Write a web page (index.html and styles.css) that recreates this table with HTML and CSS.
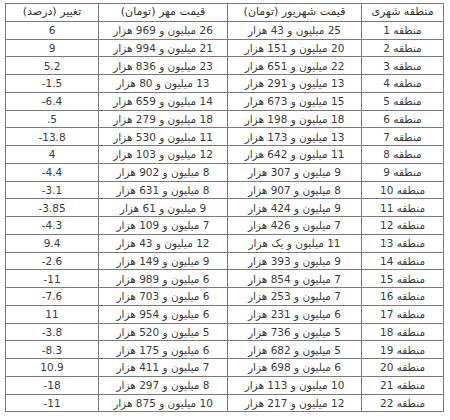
FILE: index.html
```html
<!DOCTYPE html>
<html lang="fa">
<head>
<meta charset="utf-8">
<link rel="stylesheet" href="styles.css">
</head>
<body>
<table class="price-table" dir="rtl">
<colgroup>
<col class="c-region"><col class="c-shahrivar"><col class="c-mehr"><col class="c-change">
</colgroup>
<thead>
<tr><th>منطقه شهری</th><th>قیمت شهریور (تومان)</th><th>قیمت مهر (تومان)</th><th>تغییر (درصد)</th></tr>
</thead>
<tbody>
<tr><td>منطقه 1</td><td>25 میلیون و 43 هزار</td><td>26 میلیون و 969 هزار</td><td class="chg" dir="ltr"><bdo dir="ltr">6</bdo></td></tr>
<tr><td>منطقه 2</td><td>20 میلیون و 151 هزار</td><td>21 میلیون و 994 هزار</td><td class="chg" dir="ltr"><bdo dir="ltr">9</bdo></td></tr>
<tr><td>منطقه 3</td><td>22 میلیون و 651 هزار</td><td>23 میلیون و 836 هزار</td><td class="chg" dir="ltr"><bdo dir="ltr">5.2</bdo></td></tr>
<tr><td>منطقه 4</td><td>13 میلیون و 291 هزار</td><td>13 میلیون و 80 هزار</td><td class="chg" dir="ltr"><bdo dir="ltr">-1.5</bdo></td></tr>
<tr><td>منطقه 5</td><td>15 میلیون و 673 هزار</td><td>14 میلیون و 659 هزار</td><td class="chg" dir="ltr"><bdo dir="ltr">-6.4</bdo></td></tr>
<tr><td>منطقه 6</td><td>18 میلیون و 198 هزار</td><td>18 میلیون و 279 هزار</td><td class="chg" dir="ltr"><bdo dir="ltr">.5</bdo></td></tr>
<tr><td>منطقه 7</td><td>13 میلیون و 173 هزار</td><td>11 میلیون و 530 هزار</td><td class="chg" dir="ltr"><bdo dir="ltr">-13.8</bdo></td></tr>
<tr><td>منطقه 8</td><td>11 میلیون و 642 هزار</td><td>12 میلیون و 103 هزار</td><td class="chg" dir="ltr"><bdo dir="ltr">4</bdo></td></tr>
<tr><td>منطقه 9</td><td>9 میلیون و 307 هزار</td><td>8 میلیون و 902 هزار</td><td class="chg" dir="ltr"><bdo dir="ltr">-4.4</bdo></td></tr>
<tr><td>منطقه 10</td><td>8 میلیون و 907 هزار</td><td>8 میلیون و 631 هزار</td><td class="chg" dir="ltr"><bdo dir="ltr">-3.1</bdo></td></tr>
<tr><td>منطقه 11</td><td>9 میلیون و 424 هزار</td><td>9 میلیون و 61 هزار</td><td class="chg" dir="ltr"><bdo dir="ltr">-3.85</bdo></td></tr>
<tr><td>منطقه 12</td><td>7 میلیون و 426 هزار</td><td>7 میلیون و 109 هزار</td><td class="chg" dir="ltr"><bdo dir="ltr">-4.3</bdo></td></tr>
<tr><td>منطقه 13</td><td>11 میلیون و یک هزار</td><td>12 میلیون و 43 هزار</td><td class="chg" dir="ltr"><bdo dir="ltr">9.4</bdo></td></tr>
<tr><td>منطقه 14</td><td>9 میلیون و 393 هزار</td><td>9 میلیون و 149 هزار</td><td class="chg" dir="ltr"><bdo dir="ltr">-2.6</bdo></td></tr>
<tr><td>منطقه 15</td><td>7 میلیون و 854 هزار</td><td>6 میلیون و 989 هزار</td><td class="chg" dir="ltr"><bdo dir="ltr">-11</bdo></td></tr>
<tr><td>منطقه 16</td><td>7 میلیون و 253 هزار</td><td>6 میلیون و 703 هزار</td><td class="chg" dir="ltr"><bdo dir="ltr">-7.6</bdo></td></tr>
<tr><td>منطقه 17</td><td>6 میلیون و 231 هزار</td><td>6 میلیون و 954 هزار</td><td class="chg" dir="ltr"><bdo dir="ltr">11</bdo></td></tr>
<tr><td>منطقه 18</td><td>5 میلیون و 736 هزار</td><td>5 میلیون و 520 هزار</td><td class="chg" dir="ltr"><bdo dir="ltr">-3.8</bdo></td></tr>
<tr><td>منطقه 19</td><td>5 میلیون و 682 هزار</td><td>6 میلیون و 175 هزار</td><td class="chg" dir="ltr"><bdo dir="ltr">-8.3</bdo></td></tr>
<tr><td>منطقه 20</td><td>6 میلیون و 698 هزار</td><td>7 میلیون و 411 هزار</td><td class="chg" dir="ltr"><bdo dir="ltr">10.9</bdo></td></tr>
<tr><td>منطقه 21</td><td>10 میلیون و 113 هزار</td><td>8 میلیون و 297 هزار</td><td class="chg" dir="ltr"><bdo dir="ltr">-18</bdo></td></tr>
<tr><td>منطقه 22</td><td>12 میلیون و 217 هزار</td><td>10 میلیون و 875 هزار</td><td class="chg" dir="ltr"><bdo dir="ltr">-11</bdo></td></tr>
</tbody>
</table>
</body>
</html>
```

FILE: styles.css
```css
html, body {
  margin: 0;
  padding: 0;
  background: #ffffff;
}

body {
  padding: 3px 0 0 5px;
  font-family: "DejaVu Sans", "Noto Sans", sans-serif;
  font-size: 10.5px;
  color: #3a3a3a;
}

.price-table {
  border-collapse: collapse;
  table-layout: fixed;
  width: 438px;
}

.c-region { width: 82px; }
.c-shahrivar { width: 134px; }
.c-mehr { width: 129px; }
.c-change { width: 93px; }

.price-table th,
.price-table td {
  border: 1px solid #7a7a7a;
  height: 16.75px;
  padding: 0;
  text-align: center;
  vertical-align: middle;
  white-space: nowrap;
  font-weight: normal;
  line-height: 16px;
}

.price-table th {
  font-size: 11px;
  color: #333;
}

.price-table .chg {
  direction: ltr;
  text-align: center;
}
```
